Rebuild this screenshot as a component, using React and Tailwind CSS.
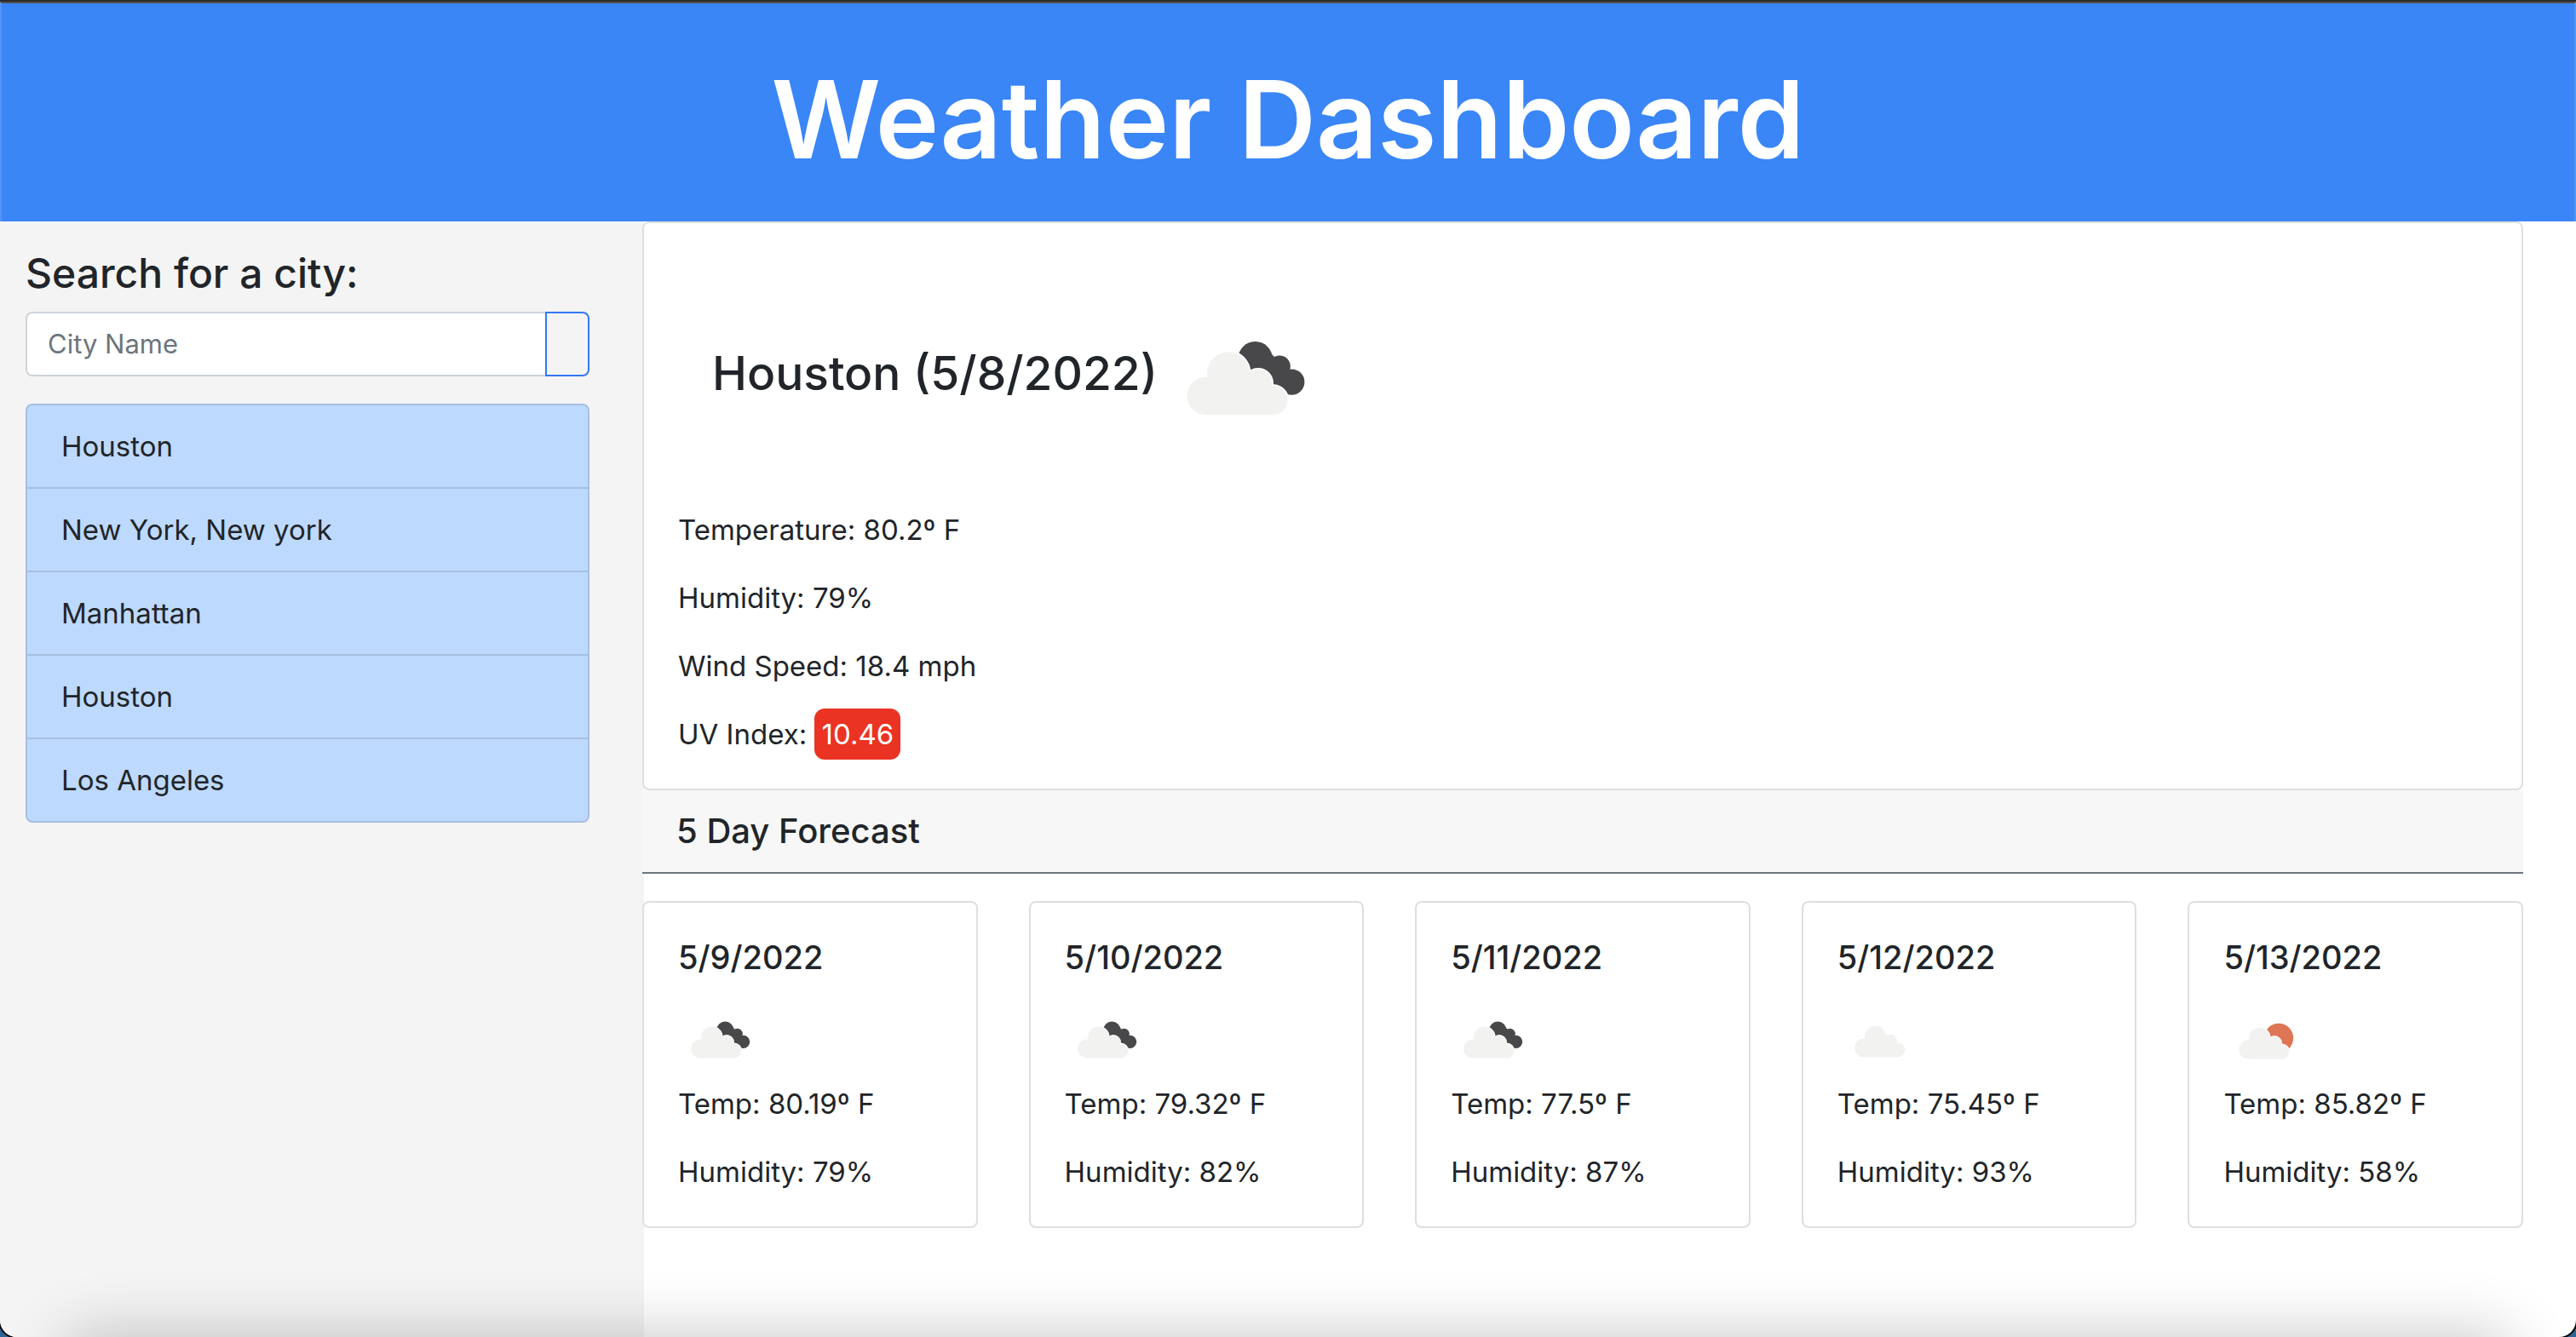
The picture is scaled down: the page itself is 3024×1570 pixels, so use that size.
const cities = ["Houston", "New York, New york", "Manhattan", "Houston", "Los Angeles"];

const days = [
  { date: "5/9/2022", icon: "broken", temp: "80.19", humidity: "79" },
  { date: "5/10/2022", icon: "broken", temp: "79.32", humidity: "82" },
  { date: "5/11/2022", icon: "broken", temp: "77.5", humidity: "87" },
  { date: "5/12/2022", icon: "scattered", temp: "75.45", humidity: "93" },
  { date: "5/13/2022", icon: "few", temp: "85.82", humidity: "58" },
];

function CloudShape() {
  return (
    <>
      <circle cx="26.2" cy="59.5" r="11" />
      <circle cx="39.5" cy="46" r="12.4" />
      <circle cx="57" cy="52" r="8.2" />
      <circle cx="65.7" cy="62" r="8.6" />
      <path d="M26 70.5H66L64 55L50 45L28 48Z" />
    </>
  );
}

function WeatherIcon({ kind, className }) {
  const shift = { broken: "translate(0 0)", scattered: "translate(5 -1)", few: "translate(3 1)" }[kind];
  return (
    <svg viewBox="0 0 100 100" className={className} role="img" aria-label={`${kind} clouds`}>
      {kind === "broken" && (
        <g fill="#48484a">
          <circle cx="55.3" cy="37.6" r="10.1" />
          <circle cx="69.6" cy="42.1" r="6.3" />
          <circle cx="76.6" cy="51.3" r="7.6" />
          <path d="M50 44L62 32L72 42L76 58.5L60 56Z" />
        </g>
      )}
      {kind === "few" && <circle cx="65" cy="47" r="17.2" fill="#dd7654" />}
      <g transform={shift}>
        <g fill="#fff" stroke="#fff" strokeWidth="1.6">
          <CloudShape />
        </g>
        <g fill="#f2f2f1">
          <CloudShape />
        </g>
      </g>
    </svg>
  );
}

export default function App() {
  return (
    <div className="min-h-screen bg-[#2f6496] font-['Inter',sans-serif] text-[#212529]">
      <div className="relative flex min-h-screen flex-col overflow-hidden rounded-b-[20px] border-t-2 border-[#2b2b2b] bg-white shadow-[0_0_0_2px_#000]">
        <header className="border-x-2 border-t-2 border-x-[#5395f6] border-t-[#555250] bg-[#3a86f7] pt-14 pb-10 text-center">
          <h1 className="text-[126px] leading-[160px] font-semibold text-white">Weather Dashboard</h1>
        </header>

        <div className="flex grow items-stretch">
          <aside className="w-1/4 bg-[#f4f4f4] pt-8 pr-16 pl-[30px]">
            <form onSubmit={(e) => e.preventDefault()}>
              <label htmlFor="city" className="mb-4 block text-[48px] leading-[58px] font-medium">
                Search for a city:
              </label>
              <div className="mb-8 flex h-[76px]">
                <input
                  id="city"
                  type="text"
                  placeholder="City Name"
                  className="min-w-0 grow rounded-l-lg border-2 border-r-0 border-[#ced4da] bg-white px-6 text-[31px] placeholder:text-[#6c757d]"
                />
                <button type="submit" aria-label="Search" className="w-[52px] rounded-r-lg border-2 border-[#3478f6]" />
              </div>
            </form>
            <ul className="divide-y-2 divide-[#a5bfe0] overflow-hidden rounded-lg border-2 border-[#a5bfe0] bg-[#bed9fe]">
              {cities.map((city, i) => (
                <li key={i}>
                  <button type="button" className="block w-full px-10 py-6 text-left text-[33px] leading-[48px]">
                    {city}
                  </button>
                </li>
              ))}
            </ul>
          </aside>

          <main className="-ml-0.5 grow pr-[62px]">
            <section className="rounded-lg border-2 border-[#dfdfdf] bg-white px-10 pt-[84px] pb-10">
              <div className="mb-[52px] flex items-center gap-1 pl-10">
                <h2 className="pb-4 text-[55px] leading-[68px] font-medium">Houston (5/8/2022)</h2>
                <WeatherIcon kind="broken" className="size-[200px]" />
              </div>
              <div className="flex flex-col gap-8 text-[33px] leading-[48px]">
                <p>Temperature: 80.2º F</p>
                <p>Humidity: 79%</p>
                <p>Wind Speed: 18.4 mph</p>
                <p>
                  UV Index: <span className="rounded-xl bg-[#eb3323] px-2 py-2.5 text-white">10.46</span>
                </p>
              </div>
            </section>

            <h3 className="border-b-2 border-[#6c757d] bg-[#f7f7f7] px-10 py-6 text-[40px] leading-[48px] font-medium">
              5 Day Forecast
            </h3>

            <div className="mt-8 grid grid-cols-5 gap-[60px]">
              {days.map((day) => (
                <article key={day.date} className="rounded-lg border-2 border-[#dfdfdf] bg-white p-10">
                  <h4 className="mb-6 text-[38px] leading-[48px] font-medium">{day.date}</h4>
                  <WeatherIcon kind={day.icon} className="size-[100px]" />
                  <div className="flex flex-col gap-8 text-[33px] leading-[48px]">
                    <p>Temp: {day.temp}º F</p>
                    <p>Humidity: {day.humidity}%</p>
                  </div>
                </article>
              ))}
            </div>
          </main>
        </div>

        <div className="pointer-events-none absolute inset-x-0 bottom-0 h-24 overflow-hidden">
          <div className="absolute inset-x-20 top-full h-20 shadow-[0_0_76px_rgba(0,0,0,0.24)]" />
        </div>
      </div>
    </div>
  );
}
